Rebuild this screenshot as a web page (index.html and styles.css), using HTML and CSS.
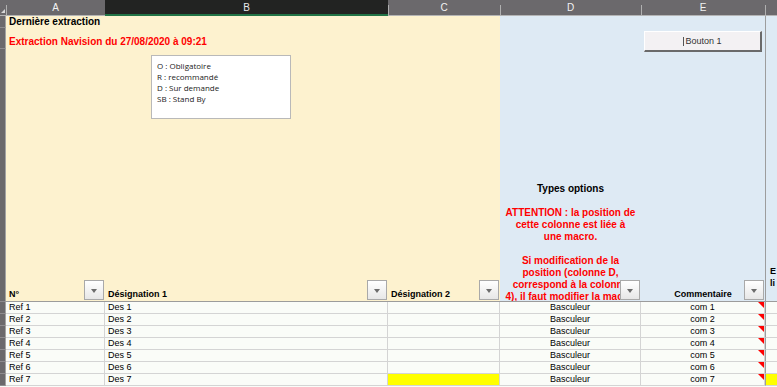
FILE: index.html
```html
<!DOCTYPE html>
<html lang="fr">
<head>
    <meta charset="UTF-8">
    <title>Extraction Navision</title>
    <link rel="stylesheet" href="styles.css">
</head>
<body>
    <div class="sheet">
        <div class="grid">
            <!-- column letters -->
            <div class="corner"></div>
            <div class="colhead">A</div>
            <div class="colhead selected">B</div>
            <div class="colhead">C</div>
            <div class="colhead">D</div>
            <div class="colhead">E</div>
            <div class="colhead"></div>

            <!-- row 1 -->
            <div class="rowhead"></div>
            <div class="cell cream span-abc title">Dernière extraction</div>
            <div class="cell blue span-de"></div>
            <div class="cell blue edge"></div>

            <!-- row 2 -->
            <div class="rowhead"></div>
            <div class="cell cream span-abc title red">Extraction Navision du 27/08/2020 à 09:21</div>
            <div class="cell blue span-de"></div>
            <div class="cell blue edge"></div>

            <!-- header row -->
            <div class="rowhead head-row"></div>
            <div class="cell cream head">N°<span class="filter"></span></div>
            <div class="cell cream head">Désignation 1<span class="filter"></span></div>
            <div class="cell cream head">Désignation 2<span class="filter"></span></div>
            <div class="cell blue head notes">
                <span class="dark">Types options</span><br>
                <br>
                ATTENTION : la position de<br>
                cette colonne est liée à<br>
                une macro.<br>
                <br>
                Si modification de la<br>
                position (colonne D,<br>
                correspond à la colonne<br>
                4), il faut modifier la macro.
                <span class="filter"></span>
            </div>
            <div class="cell blue head centered">Commentaire<span class="filter"></span></div>
            <div class="cell blue head edge extra">E<br>li</div>

            <!-- data -->
            <div class="rowhead"></div>
            <div class="cell data">Ref 1</div>
            <div class="cell data">Des 1</div>
            <div class="cell data"></div>
            <div class="cell data mid">Basculeur</div>
            <div class="cell data mid note">com 1</div>
            <div class="cell data edge"></div>

            <div class="rowhead"></div>
            <div class="cell data">Ref 2</div>
            <div class="cell data">Des 2</div>
            <div class="cell data"></div>
            <div class="cell data mid">Basculeur</div>
            <div class="cell data mid note">com 2</div>
            <div class="cell data edge"></div>

            <div class="rowhead"></div>
            <div class="cell data">Ref 3</div>
            <div class="cell data">Des 3</div>
            <div class="cell data"></div>
            <div class="cell data mid">Basculeur</div>
            <div class="cell data mid note">com 3</div>
            <div class="cell data edge"></div>

            <div class="rowhead"></div>
            <div class="cell data">Ref 4</div>
            <div class="cell data">Des 4</div>
            <div class="cell data"></div>
            <div class="cell data mid">Basculeur</div>
            <div class="cell data mid note">com 4</div>
            <div class="cell data edge"></div>

            <div class="rowhead"></div>
            <div class="cell data">Ref 5</div>
            <div class="cell data">Des 5</div>
            <div class="cell data"></div>
            <div class="cell data mid">Basculeur</div>
            <div class="cell data mid note">com 5</div>
            <div class="cell data edge"></div>

            <div class="rowhead"></div>
            <div class="cell data">Ref 6</div>
            <div class="cell data">Des 6</div>
            <div class="cell data"></div>
            <div class="cell data mid">Basculeur</div>
            <div class="cell data mid note">com 6</div>
            <div class="cell data edge"></div>

            <div class="rowhead"></div>
            <div class="cell data">Ref 7</div>
            <div class="cell data">Des 7</div>
            <div class="cell data yellow"></div>
            <div class="cell data mid">Basculeur</div>
            <div class="cell data mid note">com 7</div>
            <div class="cell data edge yellow"></div>
        </div>

        <!-- floating shapes -->
        <div class="textbox">
            O : Obligatoire<br>
            R : recommandé<br>
            D : Sur demande<br>
            SB : Stand By
        </div>
        <div class="button"><span class="caret"></span>Bouton 1</div>
    </div>
</body>
</html>
```

FILE: styles.css
```css
* {
    margin: 0;
    padding: 0;
    box-sizing: border-box;
}

body {
    font-family: 'Liberation Sans', Arial, sans-serif;
    font-size: 9px;
    color: #000;
    background: #fafcf8;
    overflow: hidden;
}

.sheet {
    position: relative;
    width: 777px;
    height: 387px;
}

.grid {
    display: grid;
    grid-template-columns: 6px 99px 283px 112px 141px 124px 12px;
    grid-template-rows: 16px 12px 21px 253px repeat(7, 12px);
}

/* Column letters */
.corner,
.colhead {
    position: relative;
    background: #6b696c;
    border-bottom: 1px solid #b4b4b4;
}

.corner::after {
    content: '';
    position: absolute;
    right: 1px;
    bottom: 2px;
    border-bottom: 4px solid #d8d8d8;
    border-left: 4px solid transparent;
}

.colhead {
    color: #f2f2f2;
    font-size: 10px;
    text-align: center;
    line-height: 16px;
}

.colhead::before {
    content: '';
    position: absolute;
    left: 0;
    top: 5px;
    bottom: 0;
    width: 1px;
    background: #b0b0b0;
}

.colhead.selected {
    background: #222322;
    border-bottom: 2px solid #217346;
    color: #e8e8e8;
    line-height: 15px;
}

.colhead.selected::before {
    display: none;
}

/* Row headers */
.rowhead {
    background: #6b696c;
    border-right: 1px solid #a3a3a3;
    border-bottom: 1px solid #8e8c8f;
}

/* Cells */
.cell {
    position: relative;
    overflow: hidden;
    white-space: nowrap;
}

.cream {
    background: #fdf2cf;
}

.blue {
    background: #deeaf4;
}

.span-abc {
    grid-column: 2 / 5;
}

.span-de {
    grid-column: 5 / 7;
}

.edge {
    border-left: 1px solid #9d9d9d;
}

.title {
    font-weight: bold;
    font-size: 10px;
    padding-left: 3px;
    line-height: 12px;
    display: flex;
    align-items: flex-end;
}

.red {
    color: #ff0000;
    padding-bottom: 1px;
}

/* Header row */
.head {
    display: flex;
    align-items: flex-end;
    padding: 0 3px 1px;
    font-weight: bold;
    line-height: 12px;
    border-bottom: 1px solid #9c9c9c;
}

.head.centered {
    justify-content: center;
}

.head.notes {
    display: block;
    padding-top: 134px;
    font-size: 10px;
    text-align: center;
    color: #ff0000;
}

.notes .dark {
    color: #000;
}

.head.extra {
    display: block;
    padding-top: 216px;
    padding-left: 4px;
}

.filter {
    position: absolute;
    right: 1px;
    bottom: 1px;
    width: 20px;
    height: 20px;
    border: 1px solid #a9a9a9;
    background: linear-gradient(#ffffff, #e7e7e7);
}

.filter::after {
    content: '';
    position: absolute;
    left: 6px;
    top: 8px;
    border-top: 4px solid #6c6c6c;
    border-left: 3px solid transparent;
    border-right: 3px solid transparent;
}

/* Data rows */
.data {
    background: #fafcf8;
    border-right: 1px solid #d4d4d4;
    border-bottom: 1px solid #d4d4d4;
    padding-left: 3px;
    line-height: 11px;
}

.data.mid {
    text-align: center;
    padding-left: 0;
}

.data.edge {
    border-left: 1px solid #9d9d9d;
    border-right: none;
}

.note::after {
    content: '';
    position: absolute;
    top: 0;
    right: 0;
    border-top: 6px solid #ff0000;
    border-left: 6px solid transparent;
}

.yellow {
    background: #ffff00;
}

/* Floating shapes */
.textbox {
    position: absolute;
    left: 151px;
    top: 55px;
    width: 140px;
    height: 64px;
    padding: 4px 5px;
    background: #fff;
    border: 1px solid #b9b9b9;
    font-family: 'Open Sans', sans-serif;
    font-size: 8px;
    line-height: 11px;
    color: #222;
}

.button {
    position: absolute;
    left: 644px;
    top: 31px;
    width: 118px;
    height: 21px;
    background: #f3f1f3;
    border-top: 1px solid #ffffff;
    border-left: 1px solid #ffffff;
    border-right: 2px solid #6a6a6a;
    border-bottom: 2px solid #6a6a6a;
    display: flex;
    align-items: center;
    justify-content: center;
    color: #333;
    font-size: 9px;
}

.caret {
    width: 1px;
    height: 9px;
    background: #555;
    margin-right: 1px;
}
```
